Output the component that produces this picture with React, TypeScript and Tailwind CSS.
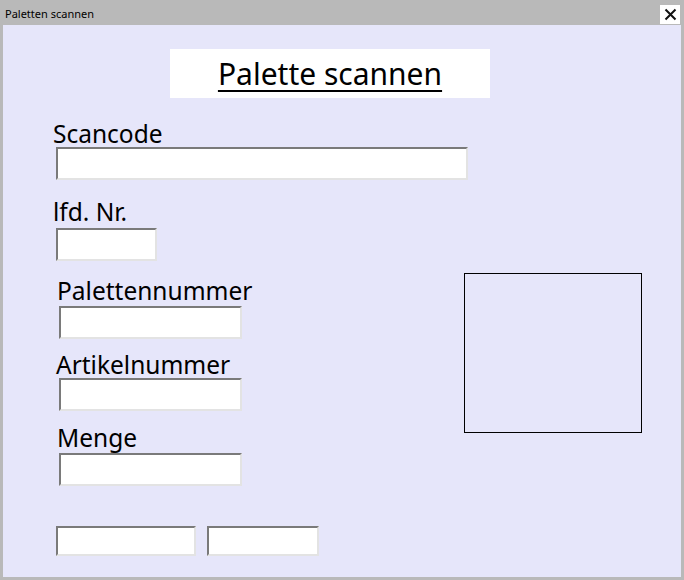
import React from "react";

const font = { fontFamily: '"Noto Sans", "Open Sans", sans-serif' };

// sunken 3D text box like a classic WinForms TextBox
function Field({ className }: { className: string }) {
  return (
    <div
      className={`bg-white border-t-2 border-l-2 border-t-[#7a7a7a] border-l-[#7a7a7a] border-b-2 border-r-2 border-b-[#e3e3e3] border-r-[#e3e3e3] ${className}`}
    />
  );
}

function Label({ text, className }: { text: string; className: string }) {
  return <div className={`text-[24.5px] leading-[26px] text-black ${className}`}>{text}</div>;
}

export default function App() {
  return (
    <div className="w-[684px] h-[580px] bg-[#b9b9b9] p-[3px] pt-0 flex flex-col" style={font}>
      {/* title bar */}
      <div className="h-[25px] flex items-center justify-between pl-[2px] pr-[2px] pt-[3px]">
        <span className="text-[11px] text-black">Paletten scannen</span>
        <div className="w-[20px] h-[19px] bg-white flex items-center justify-center mr-[-1px]">
          <svg width="13" height="13" viewBox="0 0 13 13">
            <path d="M1.5 1.5 L11.5 11.5 M11.5 1.5 L1.5 11.5" stroke="#111" strokeWidth="2" />
          </svg>
        </div>
      </div>

      {/* form body */}
      <div className="flex-1 bg-[#e6e6fa]">
        <div className="ml-[167px] mt-[24px] w-[320px] h-[49px] bg-white flex items-center justify-center">
          <span className="text-[30px] underline underline-offset-[5px] decoration-2 text-black">Palette scannen</span>
        </div>

        <Label text="Scancode" className="ml-[50px] mt-[23px]" />
        <Field className="ml-[53px] w-[412px] h-[33px]" />

        <Label text="lfd. Nr." className="ml-[50px] mt-[19px]" />
        <Field className="ml-[53px] w-[101px] h-[33px] mt-[3px]" />

        <div className="flex">
          <div className="w-[400px]">
            <Label text="Palettennummer" className="ml-[54px] mt-[17px]" />
            <Field className="ml-[56px] w-[183px] h-[33px] mt-[2px]" />

            <Label text="Artikelnummer" className="ml-[53px] mt-[13px]" />
            <Field className="ml-[56px] w-[183px] h-[33px]" />

            <Label text="Menge" className="ml-[54px] mt-[14px]" />
            <Field className="ml-[56px] w-[183px] h-[33px] mt-[2px]" />
          </div>
          <div className="ml-[61px] mt-[12px] w-[178px] h-[160px] border border-black" />
        </div>

        <div className="flex gap-[11px] ml-[53px] mt-[40px]">
          <Field className="w-[140px] h-[30px]" />
          <Field className="w-[112px] h-[30px]" />
        </div>
      </div>
    </div>
  );
}
